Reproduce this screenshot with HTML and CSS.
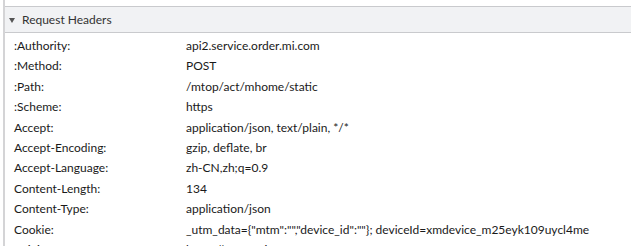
FILE: index.html
```html
<!DOCTYPE html>
<html>
<head>
<meta charset="utf-8">
<link rel="stylesheet" href="styles.css">
</head>
<body>
<div class="panel">
  <div class="topgap"></div>
  <div class="section-header"><svg class="caret" width="6" height="5" viewBox="0 0 6 5"><polygon points="0,0 6,0 3,5" fill="#555"/></svg><span class="title">Request Headers</span></div>
  <div class="rows">
    <div class="row"><span class="key">:Authority:</span><span class="val">api2.service.order.mi.com</span></div>
    <div class="row"><span class="key">:Method:</span><span class="val">POST</span></div>
    <div class="row"><span class="key">:Path:</span><span class="val">/mtop/act/mhome/static</span></div>
    <div class="row"><span class="key">:Scheme:</span><span class="val">https</span></div>
    <div class="row"><span class="key">Accept:</span><span class="val">application/json, text/plain, */*</span></div>
    <div class="row"><span class="key">Accept-Encoding:</span><span class="val">gzip, deflate, br</span></div>
    <div class="row"><span class="key">Accept-Language:</span><span class="val">zh-CN,zh;q=0.9</span></div>
    <div class="row"><span class="key">Content-Length:</span><span class="val">134</span></div>
    <div class="row"><span class="key">Content-Type:</span><span class="val">application/json</span></div>
    <div class="row"><span class="key">Cookie:</span><span class="val">_utm_data={"mtm":"","device_id":""}; deviceId=xmdevice_m25eyk109uycl4me</span></div>
    <div class="row"><span class="key">Origin:</span><span class="val">https://www.mi.com</span></div>
  </div>
</div>
</body>
</html>
```
FILE: styles.css
```css
html, body {
  margin: 0;
  padding: 0;
  background: #ffffff;
  overflow: hidden;
}
body {
  font-family: "Lato", "Open Sans", sans-serif;
  font-size: 12px;
  color: #1a1a1a;
}
.panel {
  margin-left: 3px;
  border-left: 2px solid #d4d4d6;
  height: 246px;
  overflow: hidden;
}
.topgap {
  height: 6px;
}
.section-header {
  display: flex;
  align-items: center;
  height: 25px;
  background: #f1f2f4;
  border-top: 1px solid #c9cacd;
  border-bottom: 1px solid #c9cacd;
  color: #333;
}
.caret {
  margin-left: 4px;
  margin-right: 7px;
  margin-top: 1px;
  flex: none;
}
.title {
  font-size: 12px;
}
.rows {
  padding-top: 3px;
}
.row {
  display: grid;
  grid-template-columns: 172px auto;
  padding-left: 9px;
  height: 20.4px;
  line-height: 20.4px;
  white-space: nowrap;
}
.key, .val {
  color: #1a1a1a;
}
```
